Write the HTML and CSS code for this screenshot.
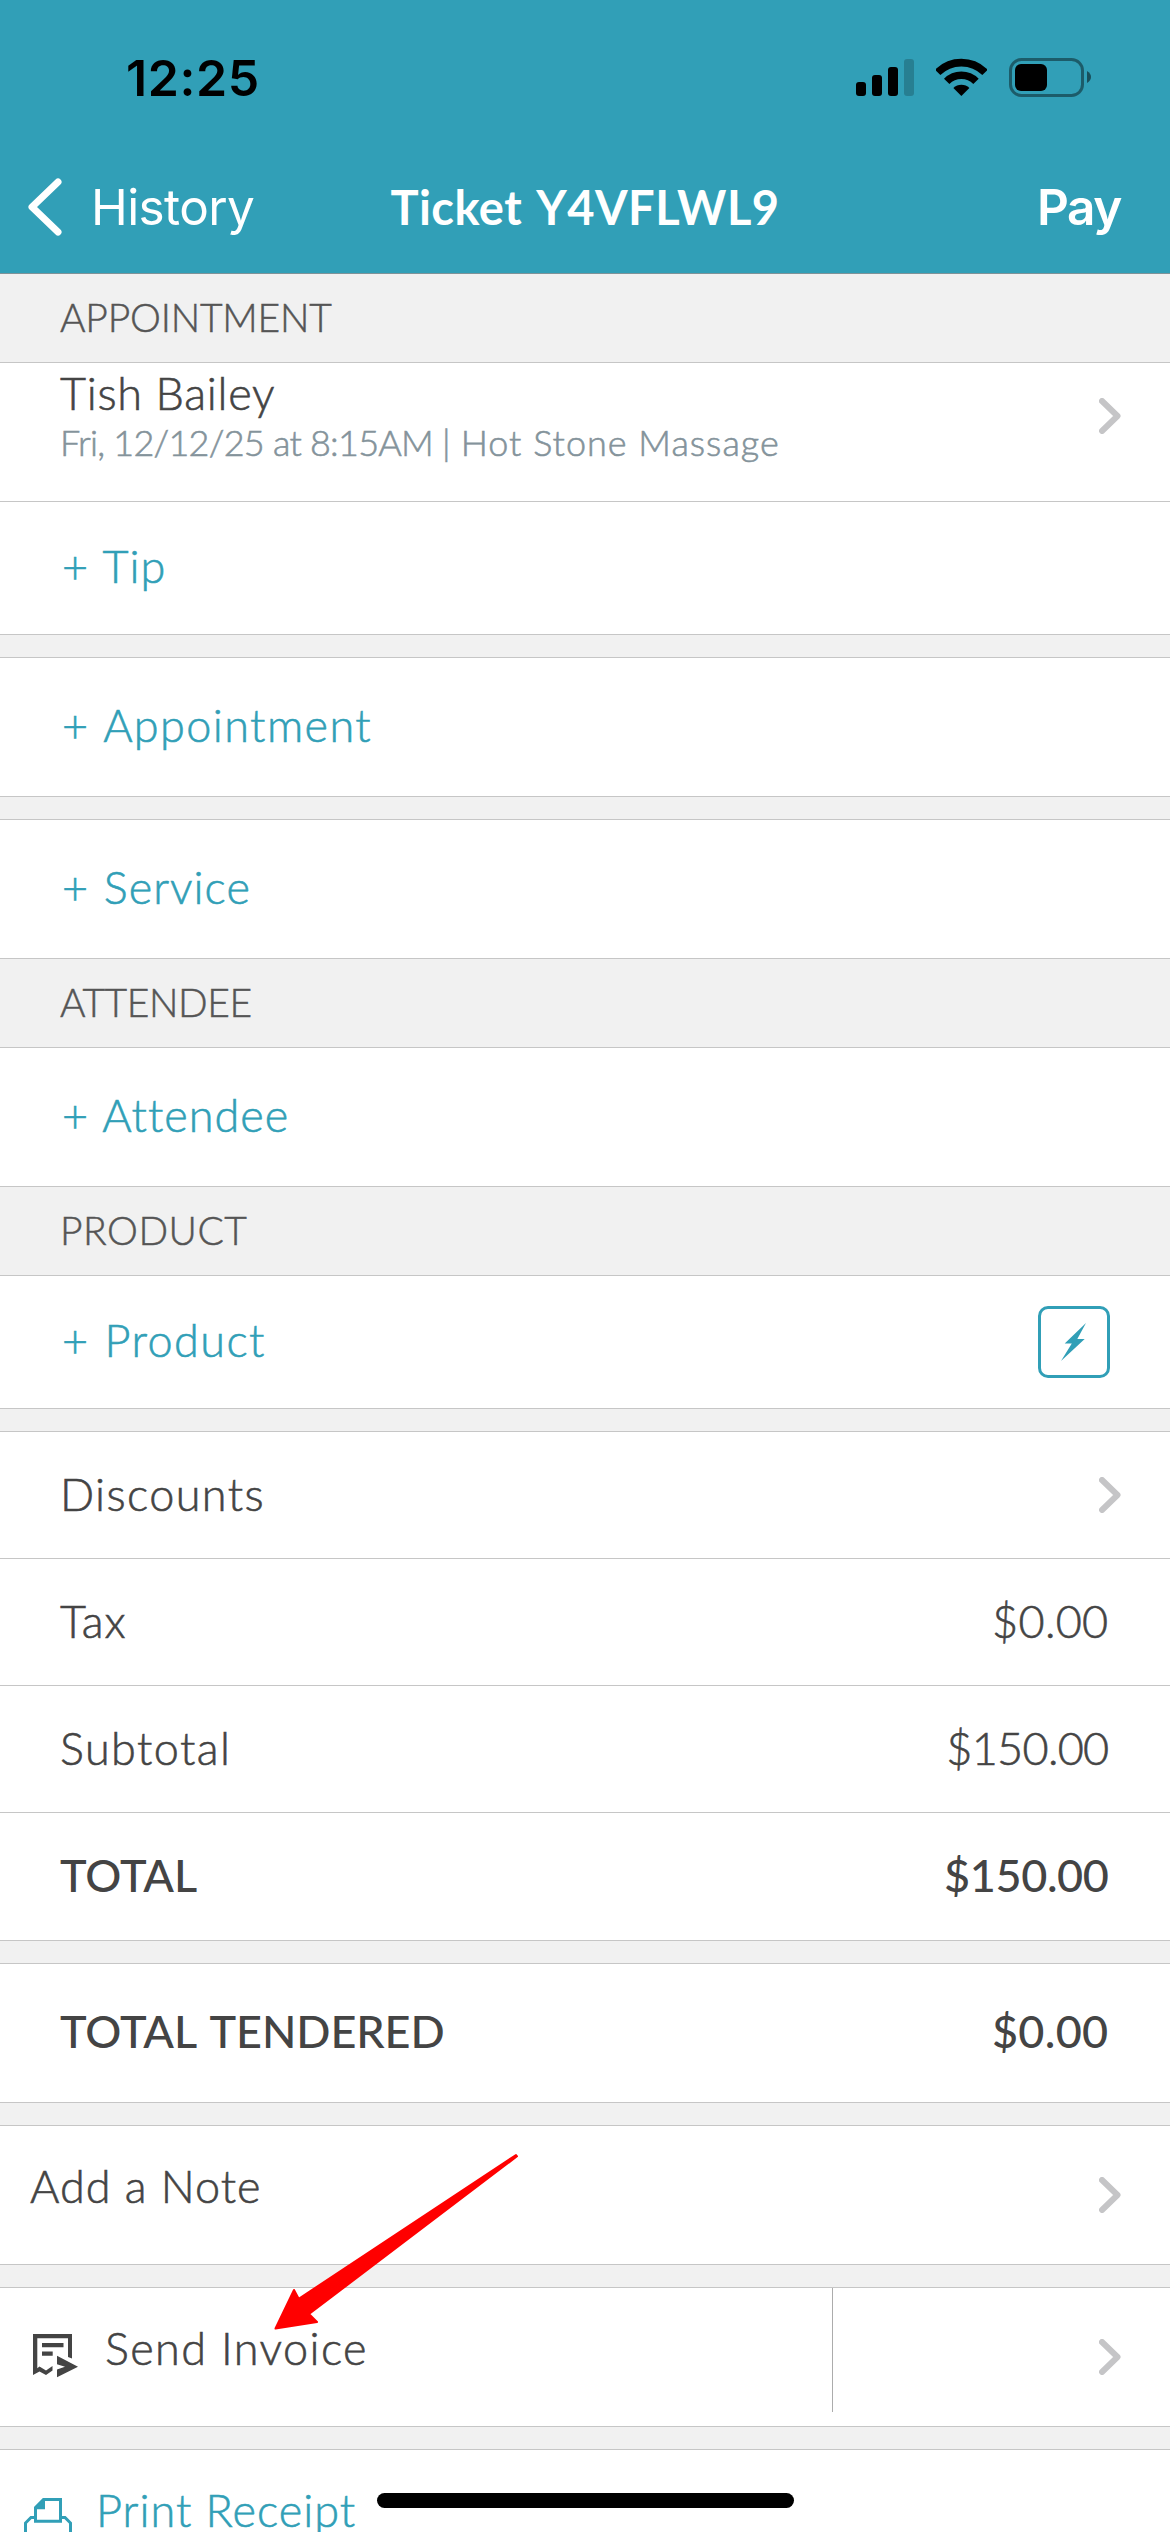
FILE: index.html
```html
<!DOCTYPE html>
<html lang="en">
  <head>
    <meta charset="UTF-8">
    <meta name="viewport" content="width=device-width, initial-scale=1.0">
    <title>Ticket Y4VFLWL9</title>

    <link rel="stylesheet" href="styles.css">
  </head>
  <body>
    <svg class="defs" width="0" height="0">
      <symbol id="chevron" viewBox="0 0 22 36">
        <path d="M3 3L18.5 18L3 33" fill="none" stroke="currentColor" stroke-width="6" stroke-linecap="round" stroke-linejoin="round"/>
      </symbol>
    </svg>

    <header class="header">
      <div class="status-bar">
        <div class="clock">12:25</div>
        <div class="status-icons">
          <svg width="58" height="39" viewBox="0 0 58 39">
            <rect x="0" y="24" width="10" height="14" rx="3"/>
            <rect x="16" y="17" width="10" height="21" rx="3"/>
            <rect x="32" y="9" width="10" height="29" rx="3"/>
            <rect x="48" y="1" width="10" height="37" rx="3" opacity=".2"/>
          </svg>
          <svg width="51" height="39" viewBox="0 0 51 39">
            <path d="M1.7 14.4A33.5 33.5 0 0 1 49 14.4M10.7 23.4A20.7 20.7 0 0 1 40 23.4" fill="none" stroke="#000" stroke-width="7.6"/>
            <path d="M25.4 38L17.4 30A11.5 11.5 0 0 1 33.4 30Z"/>
          </svg>
          <svg width="82" height="39" viewBox="0 0 82 39">
            <rect x="1.5" y="1.5" width="72" height="36" rx="11" fill="none" stroke="#000" stroke-width="3" opacity=".42"/>
            <rect x="6" y="6" width="32" height="27" rx="6"/>
            <path d="M78 13Q82 15.500 82 19T78 25Z" opacity=".5"/>
          </svg>
        </div>
      </div>
      <nav class="nav">
        <a class="back">
          <svg width="34" height="58" viewBox="0 0 34 58">
            <path d="M30 4L4 29L30 54" fill="none" stroke="#fff" stroke-width="7" stroke-linecap="round" stroke-linejoin="round"/>
          </svg>
          <span>History</span>
        </a>
        <h1 class="nav-title">Ticket Y4VFLWL9</h1>
        <a class="pay">Pay</a>
      </nav>
    </header>

    <main>
      <h2 class="section">APPOINTMENT</h2>
      <div class="row row-lg client">
        <div>
          <div class="client-name">Tish Bailey</div>
          <div class="client-info"><span class="client-date">Fri, 12/12/25 at 8:15AM |</span> Hot Stone Massage</div>
        </div>
        <svg class="chevron"><use href="#chevron"/></svg>
      </div>
      <div class="row row-md add"><span>+ Tip</span></div>
      <div class="gap"></div>
      <div class="row row-lg add"><span class="wide">+ Appointment</span></div>
      <div class="gap"></div>
      <div class="row row-lg add"><span>+ Service</span></div>

      <h2 class="section section-tight">ATTENDEE</h2>
      <div class="row row-lg add"><span>+ Attendee</span></div>

      <h2 class="section section-wide">PRODUCT</h2>
      <div class="row row-md add">
        <span class="wide">+ Product</span>
        <div class="quick-button">
          <svg width="26" height="38" viewBox="0 0 26 38">
            <path d="M25 0L16.300 16H23.700L0 38L10.800 20.500H3.700Z" fill="currentColor"/>
          </svg>
        </div>
      </div>
      <div class="gap"></div>

      <div class="row">
        <span class="wide">Discounts</span>
        <svg class="chevron"><use href="#chevron"/></svg>
      </div>
      <div class="row"><span>Tax</span><span class="amount">$0.00</span></div>
      <div class="row"><span class="wide">Subtotal</span><span class="amount amount-long">$150.00</span></div>
      <div class="row row-total strong"><span>TOTAL</span><span class="amount amount-long">$150.00</span></div>
      <div class="gap"></div>
      <div class="row row-lg strong"><span>TOTAL TENDERED</span><span class="amount">$0.00</span></div>
      <div class="gap"></div>

      <div class="row row-lg action">
        <span>Add a Note</span>
        <svg class="chevron"><use href="#chevron"/></svg>
      </div>
      <div class="gap"></div>
      <div class="row row-lg action send">
        <svg class="send-icon" width="46" height="44" viewBox="0 0 46 44">
          <path d="M0 41V0H39V24.500L35 23V4.300H4.300V34.300L6.500 32.500L13 36.500L19.500 32V36.500L13 41L6.500 37.500ZM9 9H30.500V13.300H9ZM9 17.500H19.700V21.700H9ZM24 21.700L45 32.700L24 43.300V35.500L32 32.700L24 30.200Z" fill="currentColor"/>
        </svg>
        <span class="wide">Send Invoice</span>
        <div class="send-side">
          <svg class="chevron"><use href="#chevron"/></svg>
        </div>
      </div>
      <div class="gap"></div>
      <div class="row action print">
        <svg class="print-icon" width="48" height="34" viewBox="0 0 48 34">
          <path d="M11.500 9.500L19.500 1.500H36.500V23.200H11.500Z" fill="none" stroke="currentColor" stroke-width="3"/>
          <path d="M11.500 11.300H21V2L18.500 2L11.500 9Z" fill="currentColor"/>
          <path d="M1.500 34V25L7 19.500H11M37 19.500H41L46.500 25V34" fill="none" stroke="currentColor" stroke-width="3"/>
        </svg>
        <span>Print Receipt</span>
      </div>
    </main>

    <svg class="pointer" width="270" height="200" viewBox="0 0 270 200">
      <path d="M15.500 188.500L34 150L38.700 158.800L256 15L257 16.300L49 174L57 182Z" fill="#f00" stroke="#f00" stroke-width="2" stroke-linejoin="round"/>
    </svg>
    <div class="home-indicator"></div>
  </body>
</html>
```
FILE: styles.css
```css
:root {
  --teal: #319fb7;
  --line: #c6c6c6;
  --fill: #f1f1f1;
  --text: #444;
}

* {
  box-sizing: border-box;
}

body {
  position: relative;
  margin: 0;
  width: 1170px;
  height: 2532px;
  overflow: hidden;
  background-color: #fff;
  color: var(--text);
  font-family: Lato, "Open Sans", sans-serif;
  font-size: 45px;
  font-weight: 300;
  line-height: 54px;
  letter-spacing: 1px;
}

svg {
  display: block;
  flex: none;
}

.defs {
  position: absolute;
}

/* header */
.header {
  height: 274px;
  background-color: var(--teal);
  border-bottom: 1px solid #7f9399;
}
.status-bar {
  display: flex;
  justify-content: space-between;
  height: 150px;
  padding: 48px 79px 0 126px;
  color: #000;
}
.clock {
  font: 600 50px/60px Inter, sans-serif;
  letter-spacing: .6px;
}
.status-icons {
  display: flex;
  gap: 22px;
  padding-top: 10px;
}
.nav {
  display: grid;
  grid-template-columns: 1fr auto 1fr;
  padding-top: 27px;
  color: #fff;
  line-height: 60px;
}
.back {
  display: flex;
  align-items: center;
  gap: 29px;
  padding-left: 28px;
  font-family: Inter, sans-serif;
  font-size: 49.5px;
  font-weight: 400;
  letter-spacing: -.6px;
}
.nav-title {
  margin: 0;
  font-size: 47px;
  font-weight: 700;
  letter-spacing: .5px;
  word-spacing: 4px;
}
.pay {
  padding-right: 49px;
  font-family: Inter, sans-serif;
  font-size: 49.5px;
  font-weight: 600;
  letter-spacing: -1.4px;
  text-align: right;
}

/* list */
.section {
  height: 89px;
  margin: 0;
  padding: 20px 60px 0;
  background-color: var(--fill);
  border-bottom: 1px solid var(--line);
  color: #555;
  font-size: 39px;
  font-weight: 300;
  line-height: 47px;
  letter-spacing: -.2px;
  -webkit-text-stroke: .5px;
}
.section-tight {
  letter-spacing: -.4px;
}
.section-wide {
  letter-spacing: .5px;
}
.gap {
  height: 23px;
  background-color: var(--fill);
  border-bottom: 1px solid var(--line);
}
.row {
  display: flex;
  justify-content: space-between;
  height: 127px;
  padding: 35px 60px 0;
  border-bottom: 1px solid var(--line);
  -webkit-text-stroke: .6px;
}
.row-md {
  height: 133px;
  padding-top: 37px;
}
.row-lg {
  height: 139px;
  padding-top: 40px;
}
.row-total {
  height: 128px;
}
.wide {
  letter-spacing: 1.4px;
}
.add {
  padding-left: 62px;
  color: var(--teal);
  word-spacing: 1.5px;
}
.strong {
  font-weight: 500;
  letter-spacing: -.1px;
  word-spacing: 4px;
  -webkit-text-stroke: 0;
}
.amount {
  margin-right: 1.5px;
  letter-spacing: .3px;
}
.amount-long {
  letter-spacing: -.7px;
}
.strong .amount-long {
  letter-spacing: -.4px;
}

.chevron {
  width: 22px;
  height: 36px;
  margin: 10px -11px 0 0;
  color: #c5c5c7;
}

.client {
  padding-top: 3px;
}
.client .chevron {
  margin-top: 32px;
}
.client-name {
  letter-spacing: .7px;
}
.client-info {
  color: #84939b;
  font-size: 36px;
  line-height: 44px;
}
.client-date {
  letter-spacing: -.75px;
}

.quick-button {
  display: flex;
  align-items: center;
  justify-content: center;
  width: 72px;
  height: 72px;
  margin-top: -7px;
  border: 3px solid var(--teal);
  border-radius: 10px;
}

/* note, invoice and receipt rows */
.action {
  padding-top: 33px;
  padding-left: 30px;
}
.action .chevron {
  margin-top: 18px;
}
.send {
  justify-content: flex-start;
  padding: 0 0 0 33px;
}
.send-icon {
  margin: 46px 26px 0 0;
}
.send .wide {
  margin-top: 33px;
}
.send-side {
  display: flex;
  justify-content: flex-end;
  width: 338px;
  height: 124px;
  margin-left: auto;
  padding-right: 60px;
  border-left: 1px solid #acacac;
}
.send-side .chevron {
  margin-top: 51px;
}
.print {
  justify-content: flex-start;
  gap: 24px;
  height: 83px;
  padding-left: 24px;
  border-bottom: 0;
  color: var(--teal);
}
.print-icon {
  margin-top: 15px;
}

/* overlays */
.pointer {
  position: absolute;
  top: 2140px;
  left: 260px;
}
.home-indicator {
  position: absolute;
  bottom: 24px;
  left: 377px;
  width: 417px;
  height: 15px;
  border-radius: 8px;
  background-color: #000;
}
```
